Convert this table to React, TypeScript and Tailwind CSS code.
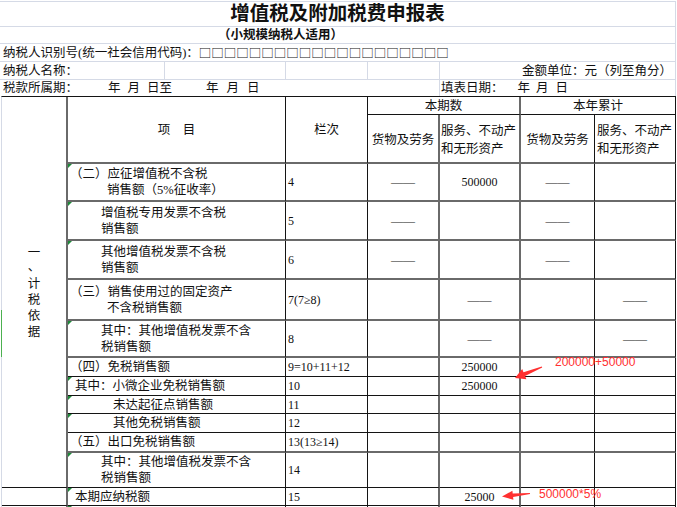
import React from "react";

type Line = { t: string; pl: string };
type RowDef = {
  lines: Line[];
  no: string;
  vals: string[];
  thick: boolean;
  tri: boolean;
};

const rows: RowDef[] = [
  {
    lines: [
      { t: "（二）应征增值税不含税", pl: "pl-[2px]" },
      { t: "销售额（5%征收率）", pl: "pl-[39px]" },
    ],
    no: "4",
    vals: ["——", "500000", "——", ""],
    thick: true,
    tri: true,
  },
  {
    lines: [
      { t: "增值税专用发票不含税", pl: "pl-[33px]" },
      { t: "销售额", pl: "pl-[33px]" },
    ],
    no: "5",
    vals: ["——", "", "——", ""],
    thick: true,
    tri: true,
  },
  {
    lines: [
      { t: "其他增值税发票不含税", pl: "pl-[33px]" },
      { t: "销售额", pl: "pl-[33px]" },
    ],
    no: "6",
    vals: ["——", "", "——", ""],
    thick: true,
    tri: true,
  },
  {
    lines: [
      { t: "（三）销售使用过的固定资产", pl: "pl-[2px]" },
      { t: "不含税销售额", pl: "pl-[39px]" },
    ],
    no: "7(7≥8)",
    vals: ["", "——", "", "——"],
    thick: true,
    tri: false,
  },
  {
    lines: [
      { t: "其中：其他增值税发票不含", pl: "pl-[33px]" },
      { t: "税销售额", pl: "pl-[33px]" },
    ],
    no: "8",
    vals: ["", "——", "", "——"],
    thick: true,
    tri: true,
  },
  {
    lines: [{ t: "（四）免税销售额", pl: "pl-[2px]" }],
    no: "9=10+11+12",
    vals: ["", "250000", "", ""],
    thick: false,
    tri: false,
  },
  {
    lines: [{ t: "其中：小微企业免税销售额", pl: "pl-[7px]" }],
    no: "10",
    vals: ["", "250000", "", ""],
    thick: false,
    tri: true,
  },
  {
    lines: [{ t: "未达起征点销售额", pl: "pl-[45px]" }],
    no: "11",
    vals: ["", "", "", ""],
    thick: false,
    tri: true,
  },
  {
    lines: [{ t: "其他免税销售额", pl: "pl-[45px]" }],
    no: "12",
    vals: ["", "", "", ""],
    thick: false,
    tri: true,
  },
  {
    lines: [{ t: "（五）出口免税销售额", pl: "pl-[2px]" }],
    no: "13(13≥14)",
    vals: ["", "", "", ""],
    thick: true,
    tri: false,
  },
  {
    lines: [
      { t: "其中：其他增值税发票不含", pl: "pl-[33px]" },
      { t: "税销售额", pl: "pl-[33px]" },
    ],
    no: "14",
    vals: ["", "", "", ""],
    thick: false,
    tri: true,
  },
];

const valRight = [
  "border-r-2 border-r-[#6a6a6a]",
  "border-r-2 border-r-[#6a6a6a]",
  "border-r border-r-[#141414]",
  "border-r border-r-[#141414]",
];

function Tri() {
  return (
    <div className="absolute left-0 top-0 w-0 h-0 border-t-[4px] border-t-[#1f8a3a] border-r-[4px] border-r-transparent" />
  );
}

function DataRow({ r }: { r: RowDef }) {
  const bb = r.thick
    ? "border-b-2 border-b-[#6a6a6a]"
    : "border-b border-b-[#141414]";
  return (
    <>
      <div
        className={`relative flex flex-col justify-center whitespace-nowrap border-r border-r-[#141414] ${bb}`}
      >
        {r.tri && <Tri />}
        {r.lines.map((l, i) => (
          <div key={i} className={`leading-[16px] ${l.pl}`}>
            {l.t}
          </div>
        ))}
      </div>
      <div
        className={`flex items-center pl-[2px] text-[12px] whitespace-nowrap border-r border-r-[#141414] ${bb}`}
      >
        {r.no}
      </div>
      {r.vals.map((v, i) => (
        <div
          key={i}
          className={`flex items-center justify-center text-[12px] ${valRight[i]} ${bb}`}
        >
          {v}
        </div>
      ))}
    </>
  );
}

export default function App() {
  return (
    <div className="relative w-[677px] h-[507px] overflow-hidden bg-white text-[#111] font-['Liberation_Serif','Noto_Sans_CJK_SC',serif] text-[12.5px] leading-[16px]">
      {/* header area (spreadsheet rows) */}
      <div className="h-[2px] w-[676px] border-b border-b-[#d5dae6]" />
      <div className="h-[25px] w-[676px] border-b border-b-[#d5dae6] border-r border-r-[#d5dae6] flex items-center justify-center text-[19.5px] leading-[24px] font-bold">
        增值税及附加税费申报表
      </div>
      <div className="h-[17px] w-[676px] border-b border-b-[#d5dae6] border-r border-r-[#d5dae6] flex items-center pl-[218px] font-bold whitespace-nowrap">
        （小规模纳税人适用）
      </div>
      <div className="h-[18px] w-[676px] border-b border-b-[#d5dae6] border-r border-r-[#d5dae6] flex items-center pl-[3px] whitespace-nowrap">
        纳税人识别号(统一社会信用代码)：
        <span className="font-['Noto_Sans_CJK_SC',sans-serif]">
          □□□□□□□□□□□□□□□□□□□□
        </span>
      </div>
      <div className="h-[18px] w-[676px] border-b border-b-[#d5dae6] border-r border-r-[#d5dae6] flex">
        <div className="w-[165px] border-r border-r-[#d5dae6] flex items-center pl-[3px] whitespace-nowrap">
          纳税人名称：
        </div>
        <div className="w-[121px] border-r border-r-[#d5dae6]" />
        <div className="w-[82px] border-r border-r-[#d5dae6]" />
        <div className="w-[72px] border-r border-r-[#d5dae6]" />
        <div className="flex-1 flex items-center pl-[82px] whitespace-nowrap">
          金额单位：元（列至角分）
        </div>
      </div>
      <div className="h-[16px] w-[676px] border-r border-r-[#d5dae6] flex">
        <div className="w-[440px] border-r border-r-[#d5dae6] flex items-center pl-[3px] whitespace-nowrap">
          <span>税款所属期：</span>
          <span className="ml-[30px]">年</span>
          <span className="ml-[7px]">月</span>
          <span className="ml-[7px]">日至</span>
          <span className="ml-[34px]">年</span>
          <span className="ml-[8px]">月</span>
          <span className="ml-[8px]">日</span>
        </div>
        <div className="flex-1 flex items-center pl-[1px] whitespace-nowrap">
          <span>填表日期：</span>
          <span className="ml-[14px]">年</span>
          <span className="ml-[6px]">月</span>
          <span className="ml-[7px]">日</span>
        </div>
      </div>

      {/* table */}
      <div className="ml-[1px] w-[675px] grid grid-cols-[66px_218px_82px_72px_81px_74px_81px] grid-rows-[18px_49px_38px_39px_39px_41px_37px_19px_19px_18px_19px_20px_35px_18px_20px] border-t border-t-[#141414] border-l border-l-[#d5dae6]">
        {/* col A merged */}
        <div className="row-span-13 flex flex-col items-center justify-center border-r-2 border-r-[#6a6a6a] border-b border-b-[#141414]">
          <div className="h-[16px] leading-[16px]">一</div>
          <div className="h-[12px] leading-[12px]">、</div>
          <div className="mt-[3px] leading-[16px]">计</div>
          <div className="leading-[16px]">税</div>
          <div className="leading-[16px]">依</div>
          <div className="leading-[16px]">据</div>
        </div>
        <div className="row-span-2 flex items-center justify-center border-r border-r-[#141414] border-b-2 border-b-[#6a6a6a]">
          项　目
        </div>
        <div className="row-span-2 flex items-center justify-center border-r border-r-[#141414] border-b-2 border-b-[#6a6a6a]">
          栏次
        </div>
        <div className="col-span-2 flex items-center justify-center border-r-2 border-r-[#6a6a6a] border-b border-b-[#141414]">
          本期数
        </div>
        <div className="col-span-2 flex items-center justify-center border-r border-r-[#141414] border-b border-b-[#141414]">
          本年累计
        </div>
        <div className="flex items-center justify-center pt-[3px] whitespace-nowrap border-r-2 border-r-[#6a6a6a] border-b-2 border-b-[#6a6a6a]">
          货物及劳务
        </div>
        <div className="flex flex-col justify-center pt-[3px] pl-[1px] leading-[18px] whitespace-nowrap border-r-2 border-r-[#6a6a6a] border-b-2 border-b-[#6a6a6a]">
          <div>服务、不动产</div>
          <div>和无形资产</div>
        </div>
        <div className="flex items-center justify-center pt-[3px] whitespace-nowrap border-r border-r-[#141414] border-b-2 border-b-[#6a6a6a]">
          货物及劳务
        </div>
        <div className="flex flex-col justify-center pt-[3px] pl-[2px] leading-[18px] whitespace-nowrap border-r border-r-[#141414] border-b-2 border-b-[#6a6a6a]">
          <div>服务、不动产</div>
          <div>和无形资产</div>
        </div>

        {rows.map((r, i) => (
          <DataRow key={i} r={r} />
        ))}

        {/* row 15 */}
        <div className="border-r-2 border-r-[#6a6a6a] border-b border-b-[#141414]" />
        <div className="relative flex items-center pl-[7px] whitespace-nowrap border-r border-r-[#141414] border-b border-b-[#141414]">
          <Tri />
          本期应纳税额
        </div>
        <div className="flex items-center pl-[2px] text-[12px] border-r border-r-[#141414] border-b border-b-[#141414]">
          15
        </div>
        <div className="border-r-2 border-r-[#6a6a6a] border-b border-b-[#141414]" />
        <div className="flex items-center justify-center text-[12px] border-r-2 border-r-[#6a6a6a] border-b border-b-[#141414]">
          25000
        </div>
        <div className="border-r border-r-[#141414] border-b border-b-[#141414]" />
        <div className="border-r border-r-[#141414] border-b border-b-[#141414]" />

        {/* row 16 (partial) */}
        <div className="border-r-2 border-r-[#6a6a6a]" />
        <div className="relative border-r border-r-[#141414]">
          <Tri />
        </div>
        <div className="border-r border-r-[#141414]" />
        <div className="border-r-2 border-r-[#6a6a6a]" />
        <div className="border-r-2 border-r-[#6a6a6a]" />
        <div className="border-r border-r-[#141414]" />
        <div className="border-r border-r-[#141414]" />
      </div>

      {/* green selection mark on left edge */}
      <div className="absolute left-[1px] top-[310px] w-[1px] h-[47px] bg-[#4cb050]" />

      {/* red annotations */}
      <div className="absolute left-[555px] top-[354px] text-[12px] leading-[16px] text-[#ff3030] font-['Liberation_Sans',sans-serif] whitespace-nowrap">
        200000+50000
      </div>
      <div className="absolute left-[539px] top-[486px] text-[12px] leading-[16px] text-[#ff3030] font-['Liberation_Sans',sans-serif] whitespace-nowrap">
        500000*5%
      </div>
      <svg
        className="absolute left-0 top-0 pointer-events-none"
        width="677"
        height="507"
        viewBox="0 0 677 507"
      >
        <polygon
          fill="#ff3030"
          points="541.8,366.4 523.5,372.3 522.2,369.1 515,378 526.4,379.3 525.1,376.1 542.2,367.6"
        />
        <polygon
          fill="#ff3030"
          points="529.9,492.9 512.7,493.5 512.4,490.8 502,496.5 513.4,499.8 513.1,497.1 530.1,494.1"
        />
      </svg>
    </div>
  );
}
